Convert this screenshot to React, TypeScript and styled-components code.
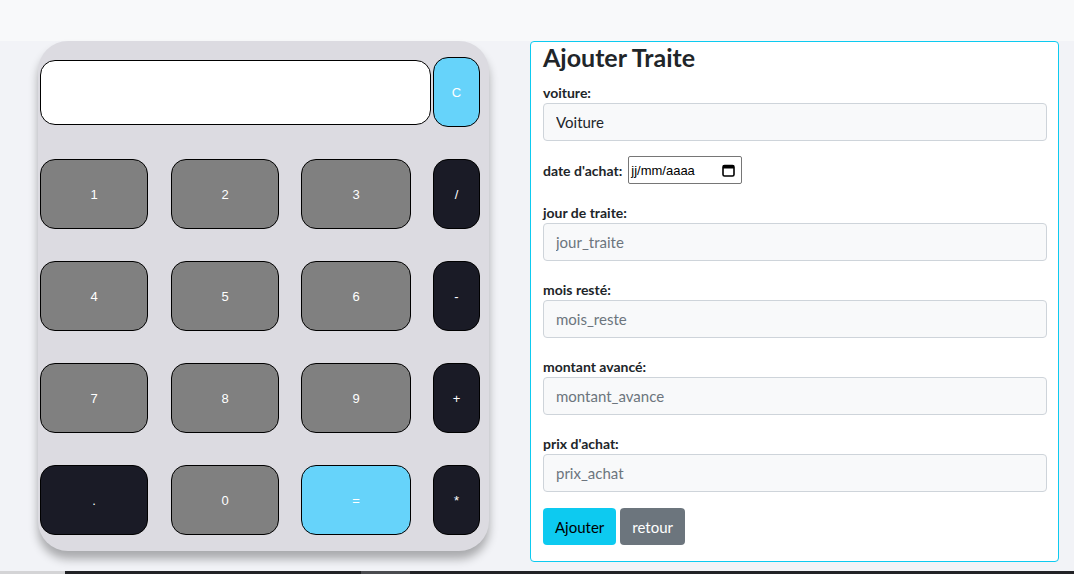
import * as React from "react";
import styled, { createGlobalStyle } from "styled-components";

const GlobalStyle = createGlobalStyle`
  html, body {
    margin: 0;
    padding: 0;
    background: #f2f3f7;
    overflow: hidden;
  }
  * {
    box-sizing: border-box;
  }
`;

const Page = styled.div`
  width: 1074px;
  height: 574px;
  display: flex;
  flex-direction: column;
  font-family: Lato, "Open Sans", sans-serif;
`;

const TopBand = styled.div`
  height: 41px;
  background: #f8f9fa;
`;

const Main = styled.div`
  flex: 1;
  display: flex;
  align-items: flex-start;
  padding-left: 38px;
  gap: 41px;
`;

const Strip = styled.div`
  height: 3px;
  display: flex;
  background: #d4d4d6;
`;

const StripTrack = styled.div`
  margin-left: 65px;
  flex: 1;
  background: #222326;
  display: flex;
`;

const StripThumb = styled.div`
  margin-left: 296px;
  width: 49px;
  background: #4a4b4f;
`;

/* calculator */

const Calc = styled.div`
  width: 451px;
  height: 510px;
  background: #dcdbe1;
  border-radius: 30px;
  padding: 16px 9px 16px 2px;
  box-shadow: 0 8px 10px rgba(0, 0, 0, 0.3);
  display: flex;
  flex-direction: column;
  gap: 32px;
`;

const KeyRow = styled.div`
  display: flex;
  align-items: center;
  height: 70px;
`;

const Display = styled.div`
  width: 391px;
  height: 65px;
  background: #fff;
  border: 1px solid #000;
  border-radius: 15px;
  margin-right: 2px;
`;

type Tone = "num" | "op" | "eq";

const toneBg: Record<Tone, string> = {
  num: "#808080",
  op: "#1a1b26",
  eq: "#66d3fa",
};

const Key = styled.button<{ $tone: Tone; $w: number; $mr?: number }>`
  width: ${(p) => p.$w}px;
  height: 70px;
  margin-right: ${(p) => p.$mr ?? 0}px;
  background: ${(p) => toneBg[p.$tone]};
  color: #fff;
  border: 1px solid #000;
  border-radius: 15px;
  font-family: "Liberation Sans", Arial, sans-serif;
  font-size: 13px;
  padding: 0;
  display: flex;
  align-items: center;
  justify-content: center;
`;

const rows: [string, Tone][][] = [
  [["1", "num"], ["2", "num"], ["3", "num"], ["/", "op"]],
  [["4", "num"], ["5", "num"], ["6", "num"], ["-", "op"]],
  [["7", "num"], ["8", "num"], ["9", "num"], ["+", "op"]],
  [[".", "op"], ["0", "num"], ["=", "eq"], ["*", "op"]],
];

const widths = [108, 108, 110, 47];
const gaps = [23, 22, 22, 0];

/* form */

const Card = styled.div`
  width: 529px;
  height: 521px;
  background: #fff;
  border: 1px solid #0dcaf0;
  border-radius: 4px;
  padding: 0 12px;
`;

const Title = styled.h2`
  margin: 0;
  font-size: 25px;
  font-weight: 700;
  line-height: 31px;
  color: #212529;
`;

const Label = styled.div`
  font-size: 14px;
  font-weight: 700;
  line-height: 21px;
  color: #212529;
`;

const Group = styled.div<{ $pt: number }>`
  display: flex;
  flex-direction: column;
  padding-top: ${(p) => p.$pt}px;
`;

const Input = styled.input`
  display: block;
  width: 504px;
  height: 38px;
  padding: 0 12px;
  background: #f8f9fa;
  border: 1px solid #ced4da;
  border-radius: 4px;
  font-family: Lato, "Open Sans", sans-serif;
  font-size: 15px;
  color: #212529;
  &::placeholder {
    color: #6c757d;
  }
`;

const DateRow = styled.div`
  display: flex;
  align-items: center;
  gap: 6px;
  margin-top: 15px;
  font-size: 14px;
  font-weight: 700;
  color: #212529;
`;

const DateBox = styled.div`
  width: 114px;
  height: 28px;
  border: 1px solid #767676;
  border-radius: 2px;
  display: flex;
  align-items: center;
  justify-content: space-between;
  padding: 0 6px 0 2px;
  font-family: "Liberation Sans", Arial, sans-serif;
  font-size: 13px;
  font-weight: 400;
  color: #000;
`;

const Actions = styled.div`
  display: flex;
  gap: 4px;
  margin-top: 16px;
`;

const Btn = styled.button<{ $v: "info" | "sec" }>`
  height: 37px;
  padding: 0 12px;
  border: none;
  border-radius: 4px;
  font-family: Lato, "Open Sans", sans-serif;
  font-size: 15px;
  background: ${(p) => (p.$v === "info" ? "#0dcaf0" : "#6c757d")};
  color: ${(p) => (p.$v === "info" ? "#000" : "#fff")};
`;

const fields = [
  { label: "jour de traite:", ph: "jour_traite" },
  { label: "mois resté:", ph: "mois_reste" },
  { label: "montant avancé:", ph: "montant_avance" },
  { label: "prix d'achat:", ph: "prix_achat" },
];

const CalendarIcon = () => (
  <svg width="13" height="13" viewBox="0 0 13 13">
    <rect x="1" y="1.5" width="11" height="10.5" rx="1.5" fill="none" stroke="#000" strokeWidth="1.6" />
    <rect x="1" y="1.5" width="11" height="3" fill="#000" />
  </svg>
);

export default function App() {
  return (
    <Page>
      <GlobalStyle />
      <TopBand />
      <Main>
        <Calc>
          <KeyRow>
            <Display />
            <Key $tone="eq" $w={47}>C</Key>
          </KeyRow>
          {rows.map((r, i) => (
            <KeyRow key={i}>
              {r.map(([t, tone], j) => (
                <Key key={t} $tone={tone} $w={widths[j]} $mr={gaps[j]}>
                  {t}
                </Key>
              ))}
            </KeyRow>
          ))}
        </Calc>
        <Card>
          <Title>Ajouter Traite</Title>
          <Group $pt={9}>
            <Label>voiture:</Label>
            <Input defaultValue="Voiture" />
          </Group>
          <DateRow>
            date d'achat:
            <DateBox>
              <span>jj/mm/aaaa</span>
              <CalendarIcon />
            </DateBox>
          </DateRow>
          {fields.map((f) => (
            <Group key={f.ph} $pt={18}>
              <Label>{f.label}</Label>
              <Input placeholder={f.ph} />
            </Group>
          ))}
          <Actions>
            <Btn $v="info">Ajouter</Btn>
            <Btn $v="sec">retour</Btn>
          </Actions>
        </Card>
      </Main>
      <Strip>
        <StripTrack>
          <StripThumb />
        </StripTrack>
      </Strip>
    </Page>
  );
}
